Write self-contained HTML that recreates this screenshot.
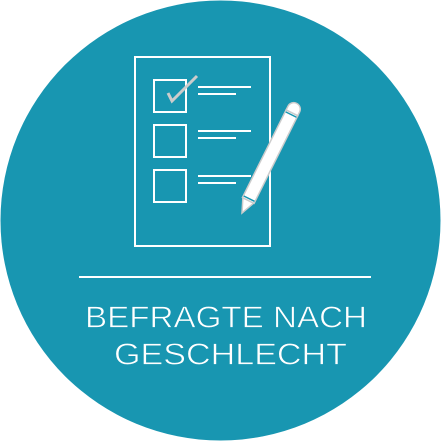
<!DOCTYPE html>
<html><head><style>html,body{margin:0;padding:0;background:#fff;width:441px;height:441px;overflow:hidden}</style></head>
<body>
<svg width="441" height="441" viewBox="0 0 441 441" xmlns="http://www.w3.org/2000/svg">
<circle cx="220.5" cy="220.5" r="220" fill="#1896b1"/>
<g fill="none" stroke="#fff" stroke-width="2">
<rect x="135" y="57" width="135" height="189"/>
<rect x="154" y="80" width="32" height="32"/>
<rect x="154" y="125" width="32" height="32"/>
<rect x="154" y="170" width="32" height="32"/>
<path d="M198 87H251M198 94H236M198 131H251M198 138H236M198 176H251M198 183H236"/>
</g>
<path d="M168 93L172 101L197 76" fill="none" stroke="#ccc" stroke-width="3"/>
<g transform="translate(242,213) rotate(-63.5)">
<path d="M0 0L14 -6L14 6Z" fill="#fff" stroke="#ccc" stroke-width="1.5"/>
<rect x="14" y="-6.5" width="98" height="13" fill="#fff" stroke="#ccc" stroke-width="1.5"/>
<path d="M112 -6.5H116A6.5 6.5 0 0 1 116 6.5H112Z" fill="#fff" stroke="#ccc" stroke-width="1.5"/>
<line x1="16" y1="-6" x2="16" y2="6" stroke="#1896b1" stroke-width="1.5"/>
<line x1="110" y1="-6" x2="110" y2="6" stroke="#1896b1" stroke-width="1.5"/>
</g>
<line x1="79" y1="277" x2="371" y2="277" stroke="#fff" stroke-width="2"/>
<g fill="#fff" stroke="#1896b1" stroke-width="0.7" font-family="Liberation Sans, sans-serif" font-size="31">
<text x="85" y="327.5" textLength="282" lengthAdjust="spacingAndGlyphs">BEFRAGTE NACH</text>
<text x="114" y="364.5" textLength="233" lengthAdjust="spacingAndGlyphs">GESCHLECHT</text>
</g>
</svg>
</body></html>
